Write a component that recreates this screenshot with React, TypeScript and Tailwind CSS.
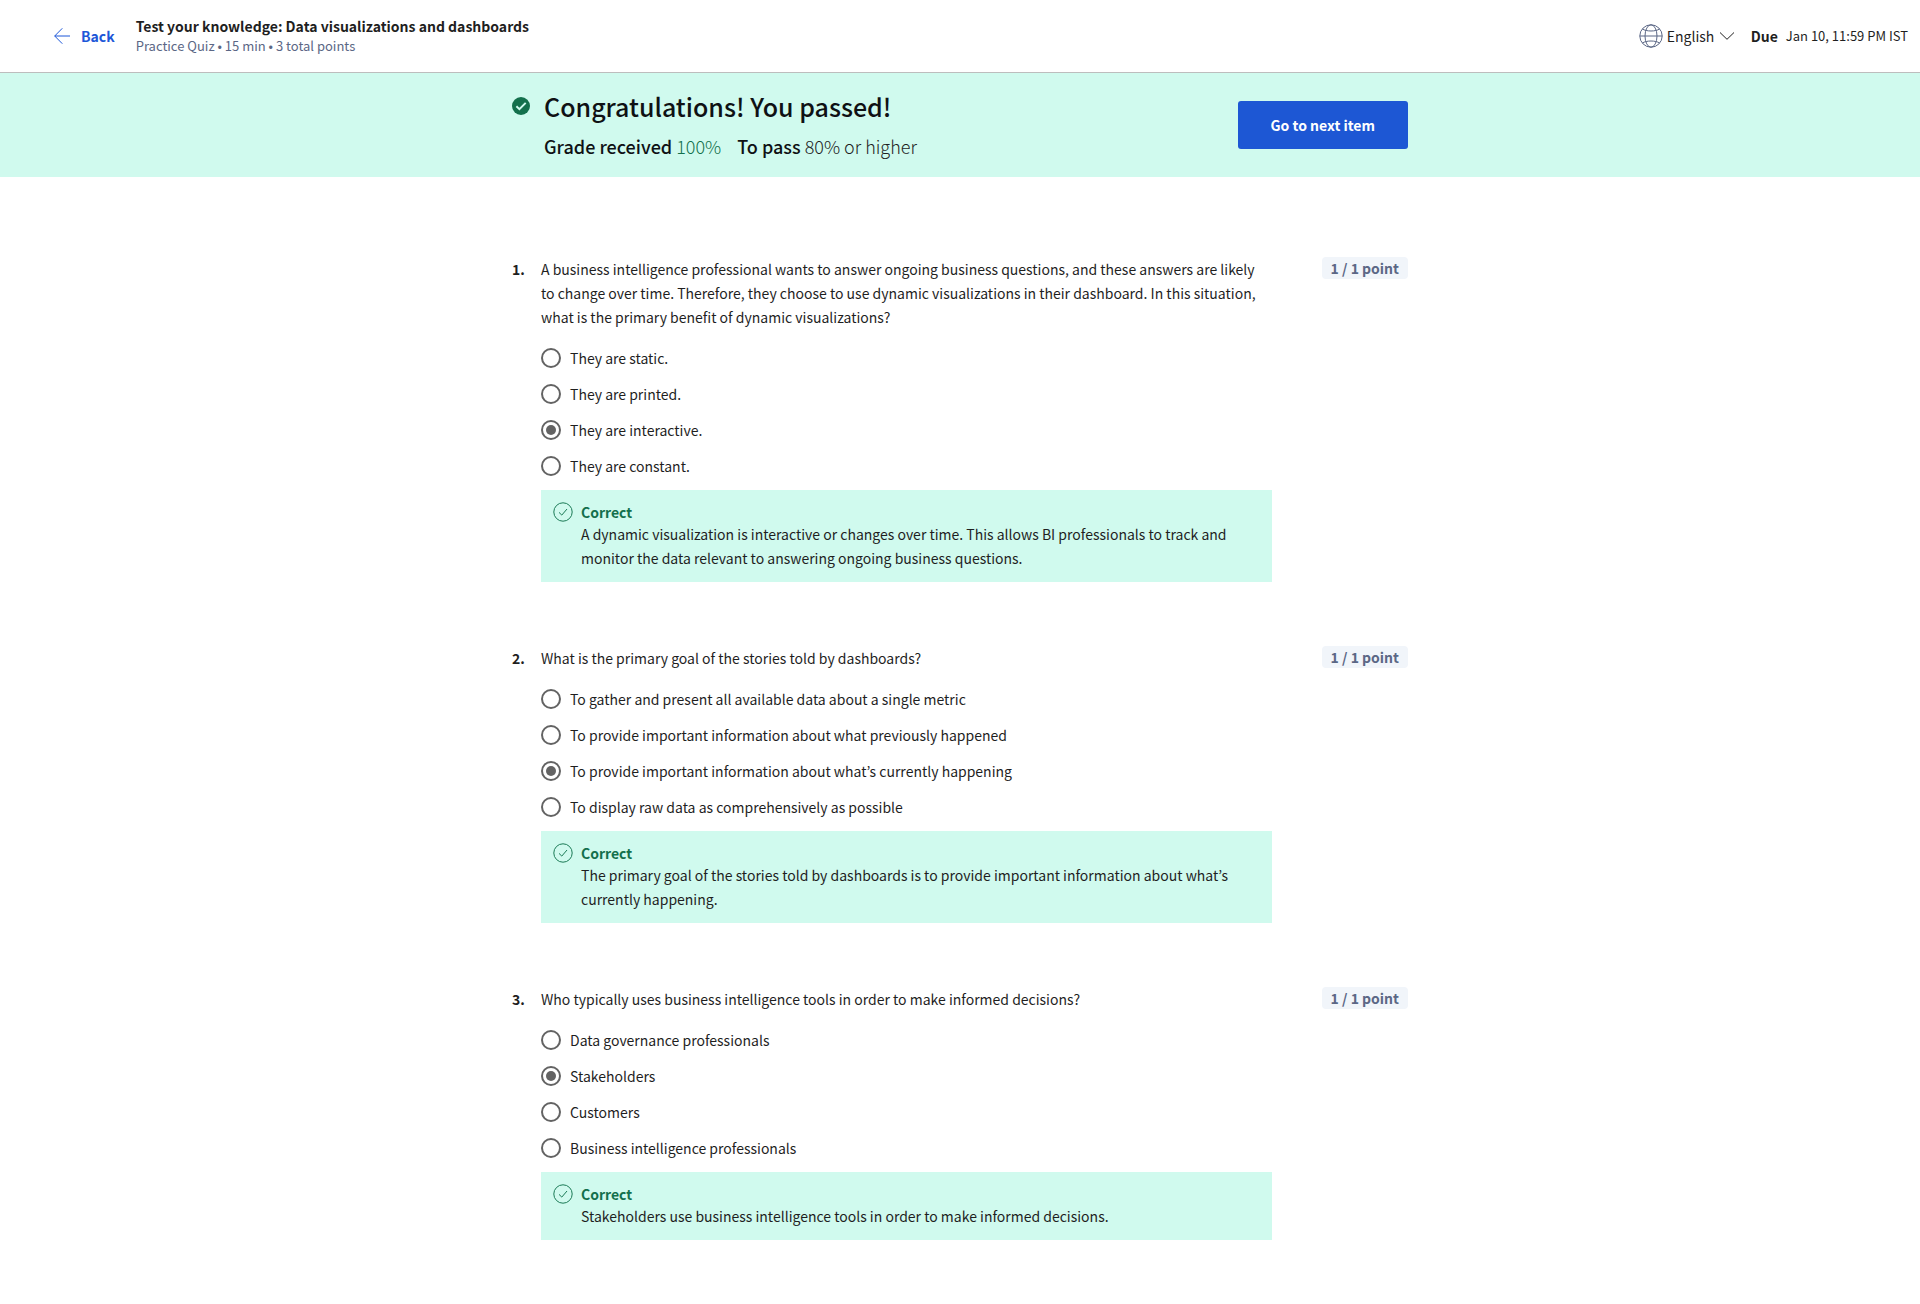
import { useState } from "react";

type Question = {
  text: string;
  options: string[];
  answer: number;
  feedback: string;
};

const QUESTIONS: Question[] = [
  {
    text: "A business intelligence professional wants to answer ongoing business questions, and these answers are likely to change over time. Therefore, they choose to use dynamic visualizations in their dashboard. In this situation, what is the primary benefit of dynamic visualizations?",
    options: ["They are static.", "They are printed.", "They are interactive.", "They are constant."],
    answer: 2,
    feedback:
      "A dynamic visualization is interactive or changes over time. This allows BI professionals to track and monitor the data relevant to answering ongoing business questions.",
  },
  {
    text: "What is the primary goal of the stories told by dashboards?",
    options: [
      "To gather and present all available data about a single metric",
      "To provide important information about what previously happened",
      "To provide important information about what’s currently happening",
      "To display raw data as comprehensively as possible",
    ],
    answer: 2,
    feedback:
      "The primary goal of the stories told by dashboards is to provide important information about what’s currently happening.",
  },
  {
    text: "Who typically uses business intelligence tools in order to make informed decisions?",
    options: [
      "Data governance professionals",
      "Stakeholders",
      "Customers",
      "Business intelligence professionals",
    ],
    answer: 1,
    feedback: "Stakeholders use business intelligence tools in order to make informed decisions.",
  },
];

function ArrowLeft() {
  return (
    <svg className="h-4 w-4" viewBox="0 0 16 16" fill="none" stroke="currentColor" aria-hidden="true">
      <path d="M8.3 0.3L0.7 8L8.3 15.7M0.7 8H16" />
    </svg>
  );
}

function Globe() {
  return (
    <svg className="h-6 w-6 text-[#5b6785]" viewBox="0 0 24 24" fill="none" stroke="currentColor" aria-hidden="true">
      <circle cx="12" cy="12" r="11.2" />
      <ellipse cx="12" cy="12" rx="6" ry="11.2" />
      <path d="M0.8 12H23.2M3.4 5C5.5 6.3 8.5 7 12 7S18.5 6.3 20.6 5M3.4 19C5.5 17.7 8.5 17 12 17S18.5 17.7 20.6 19" />
    </svg>
  );
}

function ChevronDown() {
  return (
    <svg className="h-2 w-4" viewBox="0 0 16 8" fill="none" stroke="currentColor" aria-hidden="true">
      <path d="M1 0.5L8 7.3L15 0.5" />
    </svg>
  );
}

function PassedIcon() {
  return (
    <svg className="h-[18px] w-[18px]" viewBox="0 0 18 18" fill="none" aria-hidden="true">
      <circle cx="9" cy="9" r="9" fill="#13704c" />
      <path d="M4.4 9.3L7.4 12.2L13.7 5.9" stroke="#d0faee" strokeWidth="2" />
    </svg>
  );
}

function CorrectIcon() {
  return (
    <svg className="h-5 w-5" viewBox="0 0 20 20" fill="none" stroke="#1b7a56" aria-hidden="true">
      <circle cx="10" cy="10" r="9.2" />
      <path d="M6 10.4L8.8 13.1L14 7" />
    </svg>
  );
}

function QuestionBlock({ question, number }: { question: Question; number: number }) {
  const [selected, setSelected] = useState(question.answer);
  const name = `question-${number}`;
  return (
    <section className="flex items-start">
      <span className="w-[29px] shrink-0 font-bold leading-6">{number}.</span>
      <div className="min-w-0 flex-1">
        <fieldset>
          <legend className="pr-2 pb-[11px] leading-6">{question.text}</legend>
          {question.options.map((option, i) => (
            <label key={option} className="flex h-9 items-center gap-[9px]">
              <input
                type="radio"
                name={name}
                checked={selected === i}
                onChange={() => setSelected(i)}
                className="grid h-5 w-5 shrink-0 appearance-none place-items-center rounded-full border-2 border-[#636363] before:h-2.5 before:w-2.5 before:rounded-full checked:before:bg-[#636363]"
              />
              <span>{option}</span>
            </label>
          ))}
        </fieldset>
        <div className="mt-1.5 flex gap-2 bg-[#d0faee] p-3">
          <CorrectIcon />
          <div className="min-w-0 flex-1">
            <p className="font-bold leading-5 text-[#13704c]">Correct</p>
            <p className="leading-6">{question.feedback}</p>
          </div>
        </div>
      </div>
      <div className="flex w-[136px] shrink-0 justify-end">
        <span className="rounded-sm bg-[#f1f5fa] px-[9px] font-bold leading-[22px] text-[#5b6785]">1 / 1 point</span>
      </div>
    </section>
  );
}

export default function App() {
  return (
    <div className="bg-white font-['Noto_Sans_CJK_KR','Source_Sans_Pro',sans-serif] text-sm text-[#1f1f1f]">
      <header className="flex h-[73px] items-center justify-between border-b border-[#bdbdbd] pr-3 pl-[54px]">
        <div className="flex items-center gap-[21px]">
          <a href="#back" className="flex items-center gap-[11px] font-bold text-[#1d57d8]">
            <ArrowLeft />
            Back
          </a>
          <div>
            <h1 className="font-bold leading-5">Test your knowledge: Data visualizations and dashboards</h1>
            <p className="text-[13px] leading-5 text-[#5b6785]">Practice Quiz • 15 min • 3 total points</p>
          </div>
        </div>
        <div className="flex items-center gap-4">
          <label className="flex items-center gap-1">
            <Globe />
            <select aria-label="Language" className="appearance-none bg-transparent leading-6">
              <option>English</option>
            </select>
            <ChevronDown />
          </label>
          <p className="flex items-center gap-2">
            <span className="font-bold">Due</span>
            <span className="text-[13px]">Jan 10, 11:59 PM IST</span>
          </p>
        </div>
      </header>

      <div className="bg-[#d0faee]">
        <div className="mx-auto flex h-[104px] max-w-4xl items-center justify-between">
          <div className="grid grid-cols-[32px_auto] items-center gap-y-1 pt-0.5">
            <PassedIcon />
            <h2 className="text-[25px] font-medium leading-9 text-[#0f1114]">Congratulations! You passed!</h2>
            <p className="col-start-2 flex gap-4 text-lg font-light leading-9">
              <span>
                <strong className="font-medium text-[#0f1114]">Grade received</strong>{" "}
                <span className="text-[#13704c]">100%</span>
              </span>
              <span>
                <strong className="font-medium text-[#0f1114]">To pass</strong> 80% or higher
              </span>
            </p>
          </div>
          <button type="button" className="h-12 rounded-[3px] bg-[#1d57d4] px-[33px] font-bold text-white">
            Go to next item
          </button>
        </div>
      </div>

      <main className="mx-auto flex max-w-4xl flex-col gap-16 pt-20 pb-16">
        {QUESTIONS.map((question, i) => (
          <QuestionBlock key={question.text} question={question} number={i + 1} />
        ))}
      </main>
    </div>
  );
}
